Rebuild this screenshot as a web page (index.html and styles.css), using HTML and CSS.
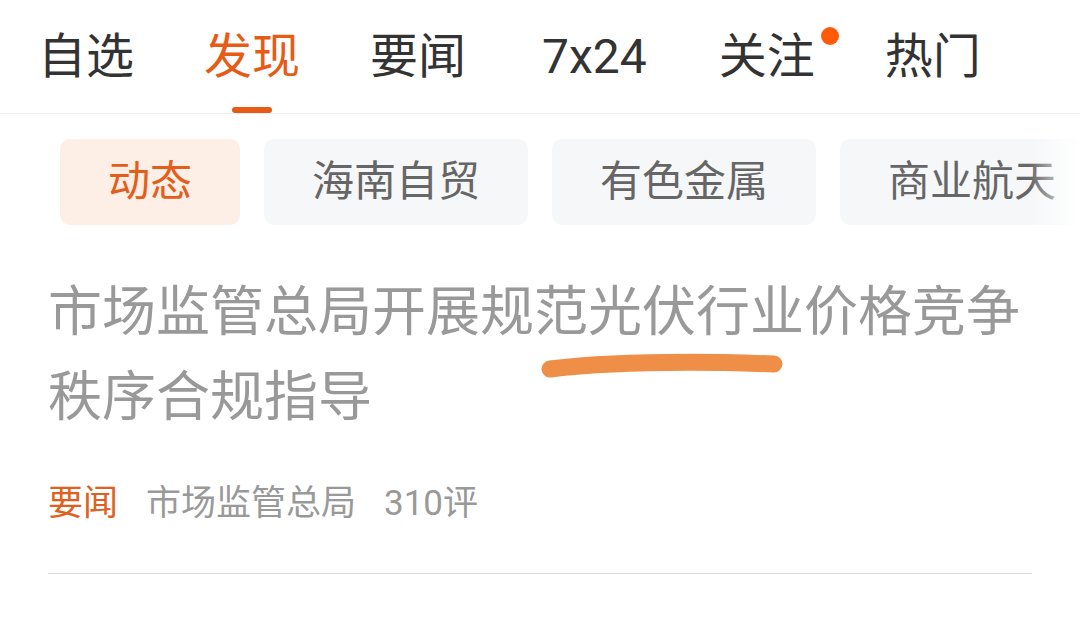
FILE: index.html
```html
<!DOCTYPE html>
<html lang="zh-CN">
<head>
    <meta charset="UTF-8">
    <meta name="viewport" content="width=device-width, initial-scale=1.0">
    <title>发现</title>
    <link rel="stylesheet" href="styles.css">
</head>
<body>
    <!-- Top tabs -->
    <div class="tabs">
        <div class="tab">自选</div>
        <div class="tab active">发现</div>
        <div class="tab">要闻</div>
        <div class="tab num">7x24</div>
        <div class="tab has-dot">关注</div>
        <div class="tab">热门</div>
    </div>

    <!-- Topic chips -->
    <div class="chips">
        <div class="chip active">动态</div>
        <div class="chip">海南自贸</div>
        <div class="chip">有色金属</div>
        <div class="chip">商业航天</div>
    </div>

    <!-- News item -->
    <div class="news">
        <div class="headline">
            市场监管总局开展规范光伏行业价格竞争秩序合规指导
            <svg class="scribble" width="260" height="36" viewBox="0 0 260 36">
                <path d="M20 19 C 80 12, 160 11, 244 14" fill="none" stroke="#ef8f47" stroke-width="17" stroke-linecap="round"/>
            </svg>
        </div>
        <div class="meta">
            <span class="tag">要闻</span>
            <span>市场监管总局</span>
            <span>310评</span>
        </div>
    </div>
</body>
</html>
```

FILE: styles.css
```css
body {
    margin: 0;
    background-color: #fff;
    font-family: Roboto, "Noto Sans CJK SC", sans-serif;
    color: #333;
}
.tabs {
    display: flex;
    gap: 70px;
    height: 113px;
    padding-left: 38px;
    border-bottom: 1px solid #eeeeee;
}
.tab {
    position: relative;
    font-size: 48px;
    line-height: 113px;
    color: #333;
    white-space: nowrap;
}
.tab.num {
    margin-left: 6px;
}
.tab.has-dot {
    margin-left: 2px;
}
.tab.active {
    color: #e65c17;
}
.tab.active::after {
    content: "";
    position: absolute;
    left: 50%;
    bottom: 0;
    width: 40px;
    height: 6px;
    margin-left: -20px;
    border-radius: 3px;
    background-color: #e65c17;
}
.has-dot::after {
    content: "";
    position: absolute;
    left: calc(100% + 6px);
    top: 27px;
    width: 18px;
    height: 18px;
    border-radius: 50%;
    background-color: #ff5a0a;
}
.chips {
    position: relative;
    display: flex;
    gap: 24px;
    margin-top: 25px;
    padding-left: 60px;
    overflow: hidden;
}
.chips::after {
    content: "";
    position: absolute;
    top: 0;
    right: 0;
    bottom: 0;
    width: 50px;
    background: linear-gradient(to right, rgba(255,255,255,0), #fff);
}
.chip {
    flex-shrink: 0;
    height: 86px;
    padding: 0 48px;
    border-radius: 10px;
    background-color: #f6f7f9;
    color: #666;
    font-size: 42px;
    line-height: 86px;
    white-space: nowrap;
}
.chip.active {
    background-color: #fdeee6;
    color: #e35d1b;
}
.news {
    margin: 0 48px;
    padding-bottom: 44px;
    border-bottom: 1px solid #dcdcdc;
}
.headline {
    position: relative;
    margin-top: 45px;
    font-size: 54px;
    line-height: 85px;
    color: #999;
}
.scribble {
    position: absolute;
    left: 482px;
    top: 80px;
}
.meta {
    display: flex;
    gap: 28px;
    margin-top: 39px;
    font-size: 35px;
    line-height: 50px;
    color: #999;
}
.meta .tag {
    color: #e0601e;
}
```
